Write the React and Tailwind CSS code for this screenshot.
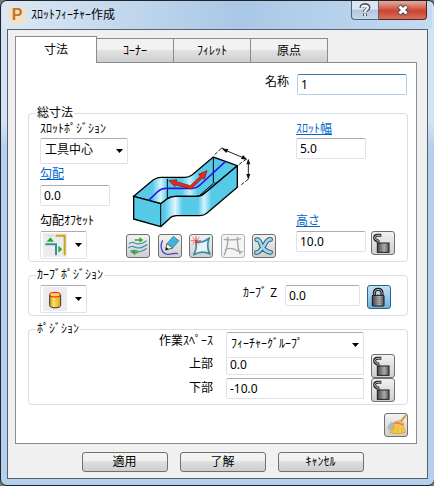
import React, { useState } from 'react';

const tabs = ['寸法', 'ｺｰﾅｰ', 'ﾌｨﾚｯﾄ', '原点'];

const inputBase = 'h-[21px] rounded-xs border border-[#dfe2ea] border-t-[#abadb3] bg-white px-[3px] text-black outline-none';

const Field = ({ id, value, className, label }) => {
  const [text, setText] = useState(value);
  return (
    <input
      id={id}
      type="text"
      aria-label={label}
      value={text}
      onChange={(e) => setText(e.target.value)}
      className={`${inputBase} ${className}`}
    />
  );
};

const Arrow = ({ className }) => (
  <svg viewBox="0 0 7 4" className={`h-1 w-[7px] ${className}`} aria-hidden="true">
    <path d="M0 0h7L3.500 4z" fill="#000" />
  </svg>
);

const Combo = ({ id, value, className }) => (
  <div className={`relative shrink-0 ${className}`}>
    <select
      id={id}
      className="h-[26px] w-full appearance-none rounded-xs border border-[#dfe2ea] border-t-[#abadb3] bg-white pr-4 pb-0.5 pl-1 text-black outline-none"
    >
      <option>{value}</option>
    </select>
    <Arrow className="pointer-events-none absolute top-[11px] right-[5px]" />
  </div>
);

const IconCombo = ({ label, children }) => (
  <button
    type="button"
    aria-label={label}
    aria-haspopup="listbox"
    className="flex h-7 w-[47px] shrink-0 items-center justify-between rounded-xs border border-[#dfe2ea] border-t-[#abadb3] bg-white pr-1 pl-0.5"
  >
    {children}
    <Arrow className="" />
  </button>
);

const ToolButton = ({ label, box, disabled, active, children }) => (
  <button
    type="button"
    aria-label={label}
    disabled={disabled}
    className={
      active
        ? 'size-6 shrink-0 rounded-[3px] border border-[#2c628b] bg-linear-to-b from-[#c5e2f3] to-[#6db4dd]'
        : disabled
          ? 'size-6 shrink-0 rounded-[3px] border border-[#adb2b5] bg-[#f4f4f4]'
          : 'size-6 shrink-0 rounded-[3px] border border-[#707070] bg-linear-to-b from-[#f2f2f2] to-[#cfcfcf]'
    }
  >
    <svg viewBox={box} className="size-[22px]" fill="none">
      {children}
    </svg>
  </button>
);

const OpenLock = ({ label }) => (
  <ToolButton label={label} box="0 0 66 66">
    <defs>
      <linearGradient id="lockBody">
        <stop offset="0" stopColor="#444" />
        <stop offset="0.600" stopColor="#bbb" />
        <stop offset="1" stopColor="#555" />
      </linearGradient>
    </defs>
    <path d="M28 10H14Q8 11 8 18Q9 26 18 26V32" stroke="#222" strokeWidth="9" strokeLinejoin="round" />
    <path d="M26 10H14Q8 12 8 18Q9 25 18 25V32" stroke="#c4c4c4" strokeWidth="3" />
    <rect x="16" y="33" width="35" height="28" fill="url(#lockBody)" stroke="#1a1a1a" strokeWidth="3" />
    <path d="M18 39h31M18 45h31M18 51h31M18 57h31" stroke="#555" strokeWidth="1" />
  </ToolButton>
);

const ClosedLock = ({ label }) => (
  <ToolButton label={label} box="0 0 66 66" active>
    <path d="M19 30V20Q20 10 30 10Q41 10 42 20V30" stroke="#111" strokeWidth="9" />
    <path d="M19 30V20Q20 10 30 10Q41 10 42 20V30" stroke="#bbb" strokeWidth="3" />
    <rect x="13" y="28" width="35" height="32" rx="2" fill="url(#lockBody)" stroke="#111" strokeWidth="3" />
    <path d="M15 35h31M15 41h31M15 47h31M15 53h31" stroke="#444" strokeWidth="1" />
  </ToolButton>
);

const SlotDrawing = () => (
  <svg viewBox="24 27 384 264" className="h-[88px] w-32" fill="none" aria-hidden="true">
    <defs>
      <linearGradient id="wall" gradientUnits="userSpaceOnUse" x1="41" y1="0" x2="352" y2="0">
        <stop offset="0" stopColor="#56cbe8" />
        <stop offset="0.300" stopColor="#56cbe8" />
        <stop offset="0.400" stopColor="#e2f7fc" />
        <stop offset="0.470" stopColor="#56cbe8" />
        <stop offset="0.620" stopColor="#56cbe8" />
        <stop offset="0.680" stopColor="#d5f3fa" />
        <stop offset="0.750" stopColor="#56cbe8" />
        <stop offset="1" stopColor="#56cbe8" />
      </linearGradient>
      <linearGradient id="inner" gradientUnits="userSpaceOnUse" x1="41" y1="0" x2="352" y2="0">
        <stop offset="0" stopColor="#56cbe8" />
        <stop offset="0.180" stopColor="#56cbe8" />
        <stop offset="0.260" stopColor="#d5f3fa" />
        <stop offset="0.330" stopColor="#56cbe8" />
        <stop offset="0.460" stopColor="#56cbe8" />
        <stop offset="0.540" stopColor="#c5eff8" />
        <stop offset="0.620" stopColor="#56cbe8" />
        <stop offset="1" stopColor="#56cbe8" />
      </linearGradient>
    </defs>
    <path
      d="M41 184L93 140Q107 127 124 127H195Q207 127 216 120L280 66L352 92L254 175Q244 184 230 184H168Q153 184 144 190L122 206Z"
      fill="url(#inner)"
      stroke="#000"
      strokeWidth="4"
    />
    <path d="M142 132V190M280 66V142L290 147M237 183L280 145M247 183L291 147" stroke="#000" strokeWidth="3" />
    <path
      d="M41 184L122 206L144 190Q153 184 168 184H230Q244 184 254 175L352 92V157L260 235Q252 242 240 242H170Q156 242 148 251L122 275L41 252Z"
      fill="url(#wall)"
      stroke="#000"
      strokeWidth="4"
      strokeLinejoin="round"
    />
    <path d="M122 206V275" stroke="#000" strokeWidth="3" />
    <path d="M86 196L112 171Q123 160 138 160H215Q230 160 240 150L316 80" stroke="#2b14ee" strokeWidth="5" />
    <path
      d="M147 137L170 134L169 140L211 152L241 124L236 118L261 107L253 133L247 129L214 162L164 149L165 155Z"
      fill="#e8281c"
      stroke="#7a1010"
      strokeWidth="2"
    />
    <path d="M284 59L292 51M296 48L305 39L313 42M357 89L366 81M370 79L378 73M364 149L372 143M376 140L385 132" stroke="#222" strokeWidth="3" />
    <path d="M312 44L376 71M385 76V128" stroke="#222" strokeWidth="3" />
    <path d="M306 41L325 42L319 54ZM382 74L363 72L369 60ZM385 71L379 88H391ZM385 134L379 117H391Z" fill="#111" />
  </svg>
);

const Group = ({ title, className, children }) => (
  <fieldset className={`rounded-[4px] border border-[#d5dfe5] pr-3 pl-[11px] ${className}`}>
    <legend className="-ml-1 px-px leading-4">{title}</legend>
    {children}
  </fieldset>
);

const DialogButton = ({ children }) => (
  <button
    type="button"
    className="h-5 w-[86px] rounded-[3px] border border-[#707070] bg-linear-to-b from-[#f2f2f2] from-40% via-[#dddddd] via-50% to-[#cfcfcf] leading-4"
  >
    {children}
  </button>
);

const App = () => {
  const [activeTab, setActiveTab] = useState(0);

  return (
    <div className="flex min-h-screen bg-[#777] font-['Noto_Sans','Noto_Sans_CJK_JP',sans-serif] text-[12px] leading-4 text-black">
      <div className="flex flex-1 flex-col rounded-[7px] border border-[#20242c] bg-linear-to-b from-[#d3e3f3] via-[#d3e3f3] via-25% to-[#b5d0ed] to-30% px-1.5 pb-1.5">
        <header className="-mx-1 flex h-7 items-start rounded-t-[5px] bg-linear-to-r from-[#dce8f4] via-[#a9c8e6] via-55% to-[#c4daf0]">
          <div className="flex h-7 flex-1 items-center gap-1.5 pl-1.5">
            <span className="flex size-4 items-center justify-center bg-[#f8dfc2] font-['Liberation_Sans',sans-serif] text-[16px] leading-4 font-bold text-[#bf7430]">
              P
            </span>
            <h1>ｽﾛｯﾄﾌｨｰﾁｬｰ作成</h1>
          </div>
          <div className="mr-[5px] flex">
            <button
              type="button"
              aria-label="ヘルプ"
              className="flex h-[19px] w-7 items-center justify-center rounded-bl-[4px] border border-t-0 border-[#4e6480] bg-linear-to-b from-[#dbe6f2] from-45% via-[#b3c6dc] via-50% to-[#c6d8eb]"
            >
              <svg viewBox="0 0 12 14" className="h-[14px] w-3" fill="none">
                <path d="M2.500 5C2.500 1.200 9.500 1.200 9.500 4.500C9.500 6.800 6 6.500 6 9M6 10.500V13" stroke="#4a5668" strokeWidth="4" />
                <path d="M2.800 4.800C2.800 2 9 2 9 4.500C9 6.500 6 6.500 6 9M6 10.800V12.700" stroke="#fff" strokeWidth="2" />
              </svg>
            </button>
            <button
              type="button"
              aria-label="閉じる"
              className="flex h-[19px] w-12 items-center justify-center rounded-br-[4px] border border-t-0 border-l-0 border-[#5c2020] bg-linear-to-b from-[#e3a495] from-5% via-[#c8442f] via-55% to-[#d8705a]"
            >
              <svg viewBox="0 0 14 12" className="h-3 w-3.5" fill="none">
                <path d="M3 2L11 10M11 2L3 10" stroke="#4d4a55" strokeWidth="5" />
                <path d="M3.500 2.500L10.500 9.500M10.500 2.500L3.500 9.500" stroke="#fff" strokeWidth="3" />
              </svg>
            </button>
          </div>
        </header>

        <main className="flex flex-1 flex-col border border-[#56636f] bg-[#f0f0f0] px-[7px] pt-1.5 pb-1.5">
          <div role="tablist" className="flex items-end">
            {tabs.map((tab, index) => (
              <button
                key={tab}
                type="button"
                role="tab"
                aria-selected={index === activeTab}
                onClick={() => setActiveTab(index)}
                className={
                  index === activeTab
                    ? 'relative z-10 -mb-px h-[27px] w-[82px] border border-b-0 border-[#898c95] bg-white'
                    : 'h-6 w-[77px] border border-b-0 border-l-0 border-[#898c95] bg-linear-to-b from-[#f2f2f2] from-45% via-[#e2e2e2] via-50% to-[#cfcfcf]'
                }
              >
                {tab}
              </button>
            ))}
          </div>

          <section className="mr-[3px] flex-1 border border-[#898c95] bg-white pr-2 pl-3">
            <div className="mt-[11px] mr-px mb-2.5 flex items-start justify-end gap-2">
              <label htmlFor="name">名称</label>
              <input
                id="name"
                type="text"
                defaultValue="1"
                className="h-[21px] w-[110px] rounded-xs border border-[#b5cfe7] border-t-[#3d7bad] bg-white px-[3px] outline-none"
              />
            </div>

            <Group title="総寸法" className="pb-0.5">
              <div className="flex justify-between">
                <div className="flex w-[86px] flex-col items-start">
                  <label htmlFor="slot-position" className="whitespace-nowrap">ｽﾛｯﾄﾎﾟｼﾞｼｮﾝ</label>
                  <Combo id="slot-position" value="工具中心" className="mt-px w-[88px]" />
                  <a href="#draft" className="mt-0.5 text-[#0066cc] underline">勾配</a>
                  <Field id="draft" label="勾配" value="0.0" className="mt-[3px] w-[70px]" />
                  <span className="mt-[7px] mb-0.5">勾配ｵﾌｾｯﾄ</span>
                  <IconCombo label="勾配ｵﾌｾｯﾄ">
                    <svg viewBox="69 402 72 72" className="size-6 bg-[#ececec]" fill="none">
                      <path d="M107 410H134V469" stroke="#c8a31d" strokeWidth="6" />
                      <path d="M76 436H108V469" stroke="#3d8ba5" strokeWidth="6" />
                      <path d="M80 428H102L91 415ZM115 440V461L127 451Z" fill="#22b222" />
                      <path d="M82 410H102M134 446" stroke="#bbb" strokeWidth="2" />
                    </svg>
                  </IconCombo>
                </div>

                <div className="mr-5 flex w-[150px] flex-col justify-between pt-[23px] pb-px">
                  <div className="pl-0.5">
                    <SlotDrawing />
                  </div>
                  <div className="flex justify-between">
                    <ToolButton label="カーブ反転" box="21 300 66 66">
                      <path d="M27 327C36 317 42 324 50 326S68 326 80 317M25 339C34 329 42 336 50 338S68 338 82 328M31 350C40 342 46 347 54 349S70 349 80 340" stroke="#4b93ad" strokeWidth="4" />
                      <path d="M44 313H58V307L70 315L58 323V317H44ZM54 355H46V361L33 352L46 344V350H54Z" fill="#35a82c" />
                    </ToolButton>
                    <ToolButton label="カーブ編集" box="114 300 66 66">
                      <path d="M125 316C115 335 122 357 140 358C155 359 160 352 171 356" stroke="#4b46c8" strokeWidth="4" />
                      <path d="M134 345L138 326L157 304L174 317L155 339Z" fill="#3fb4dc" stroke="#28708c" strokeWidth="2" />
                      <path d="M134 345L138 326L155 339Z" fill="#fff" stroke="#333" strokeWidth="2" />
                      <path d="M134 346L136 337L143 342Z" fill="#111" />
                    </ToolButton>
                    <ToolButton label="カーブ作成" box="210 300 66 66">
                      <path d="M228 320Q247 326 268 309Q257 335 270 357Q247 345 221 359Q232 340 228 320Z" fill="#e5f4f8" stroke="#3b8ca8" strokeWidth="5" strokeLinejoin="round" />
                      <path d="M228 303V331M214 317H242M218 307L238 327M238 307L218 327" stroke="#f02020" strokeWidth="3" strokeDasharray="4 2" />
                    </ToolButton>
                    <ToolButton label="カーブ選択" box="303 300 66 66" disabled>
                      <path d="M308 313Q335 317 360 311M320 306Q322 335 309 361M349 306Q349 340 358 358M311 345Q330 334 353 349L365 351" stroke="#a5a5a5" strokeWidth="4" />
                    </ToolButton>
                    <ToolButton label="カーブ削除" box="399 300 66 66">
                      <g strokeLinecap="round">
                        <path d="M410 314C424 312 419 334 432 342C438 348 444 352 452 352M452 313C437 312 437 331 427 339C418 346 419 353 409 353" stroke="#25657e" strokeWidth="14" />
                        <path d="M410 314C424 312 419 334 432 342C438 348 444 352 452 352M452 313C437 312 437 331 427 339C418 346 419 353 409 353" stroke="#a3d6e6" strokeWidth="8" />
                      </g>
                    </ToolButton>
                  </div>
                </div>

                <div className="flex w-[99px] flex-col items-start">
                  <a href="#slot-width" className="text-[#0066cc] underline">ｽﾛｯﾄ幅</a>
                  <Field id="slot-width" label="ｽﾛｯﾄ幅" value="5.0" className="mt-px w-[70px]" />
                  <a href="#height" className="mt-auto mb-0.5 text-[#0066cc] underline">高さ</a>
                  <div className="mb-1 flex items-start gap-[5px]">
                    <Field id="height" label="高さ" value="10.0" className="w-[70px]" />
                    <OpenLock label="高さロック" />
                  </div>
                </div>
              </div>
            </Group>

            <Group title="ｶｰﾌﾞﾎﾟｼﾞｼｮﾝ" className="mt-[5px] pt-0.5 pb-0.5">
              <div className="flex items-start justify-between">
                <IconCombo label="ｶｰﾌﾞﾎﾟｼﾞｼｮﾝ">
                  <svg viewBox="69 81 72 72" className="size-6 bg-[#ececec]" fill="none">
                    <defs>
                      <linearGradient id="cylinder">
                        <stop offset="0" stopColor="#d29b12" />
                        <stop offset="0.350" stopColor="#ffe060" />
                        <stop offset="1" stopColor="#dca51a" />
                      </linearGradient>
                    </defs>
                    <path d="M89 104V136C89 146 122 146 122 136V104" fill="url(#cylinder)" stroke="#333" strokeWidth="3" />
                    <ellipse cx="105" cy="104" rx="16" ry="7" fill="#f6d060" stroke="#f01010" strokeWidth="3" />
                  </svg>
                </IconCombo>
                <div className="mr-1 flex items-start">
                  <label htmlFor="curve-z" className="mr-2">ｶｰﾌﾞ Z</label>
                  <Field id="curve-z" value="0.0" className="mr-[7px] w-[75px]" />
                  <ClosedLock label="ｶｰﾌﾞ Zロック" />
                </div>
              </div>
            </Group>

            <Group title="ﾎﾟｼﾞｼｮﾝ" className="mt-[5px] pb-0.5">
              <div className="-mt-[5px] grid grid-cols-[1fr_138px_24px] items-start gap-x-[7px]">
                <label htmlFor="workspace" className="pt-px pr-1.5 text-right">作業ｽﾍﾟｰｽ</label>
                <Combo id="workspace" value="ﾌｨｰﾁｬｰｸﾞﾙｰﾌﾟ" className="-mb-1 w-full" />
                <span />
                <label htmlFor="top" className="pt-0.5 pr-1.5 text-right">上部</label>
                <Field id="top" value="0.0" className="w-full" />
                <OpenLock label="上部ロック" />
                <label htmlFor="bottom" className="pt-0.5 pr-1.5 text-right">下部</label>
                <Field id="bottom" value="-10.0" className="w-full" />
                <OpenLock label="下部ロック" />
              </div>
            </Group>

            <div className="mt-2 flex justify-end">
              <ToolButton label="クリア" box="501 225 66 66">
                <path d="M507 262L520 247L532 257L520 281Z" fill="#b9c4bd" />
                <path d="M508 270L525 252M512 276L528 257" stroke="#8da49a" strokeWidth="2" />
                <path d="M564 228L545 252" stroke="#c9962b" strokeWidth="6" />
                <path d="M529 250Q544 239 557 252Q555 269 563 280Q542 289 515 281Q529 269 529 250Z" fill="#f5ca4c" stroke="#d09a28" strokeWidth="2" />
                <path d="M527 253Q540 249 555 258" stroke="#ec7777" strokeWidth="5" />
                <path d="M531 265L523 280M541 265L537 283M550 266L552 281" stroke="#d9a12c" strokeWidth="2" />
              </ToolButton>
            </div>
          </section>

          <footer className="mt-2 ml-2.5 flex justify-center gap-3">
            <DialogButton>適用</DialogButton>
            <DialogButton>了解</DialogButton>
            <DialogButton>ｷｬﾝｾﾙ</DialogButton>
          </footer>
        </main>
      </div>
    </div>
  );
};

export default App;
